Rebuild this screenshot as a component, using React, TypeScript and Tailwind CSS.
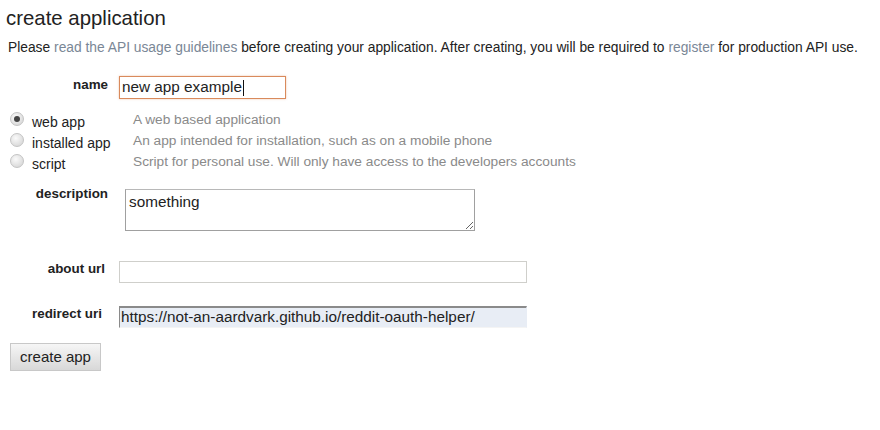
import React from "react";

const APP_TYPES = [
  { id: "web", label: "web app", help: "A web based application", checked: true },
  { id: "installed", label: "installed app", help: "An app intended for installation, such as on a mobile phone", checked: false },
  { id: "script", label: "script", help: "Script for personal use. Will only have access to the developers accounts", checked: false },
];

function Radio({ checked }: { checked: boolean }) {
  return (
    <span className="mb-[4px] flex h-[14px] w-[14px] shrink-0 items-center justify-center rounded-full border border-[#c4c4c4] bg-[radial-gradient(circle_at_40%_35%,#fafafa,#d0d0d0)]">
      {checked && <span className="h-[6px] w-[6px] rounded-full bg-[#444]" />}
    </span>
  );
}

export default function App() {
  return (
    <div className="h-[430px] w-[880px] bg-white font-['Liberation_Sans',Arial,sans-serif] text-[#222]">
      <h1 className="pl-[6px] pt-[5px] text-[20.4px] leading-[26px]">create application</h1>

      <p className="mt-[9px] pl-[8px] text-[13.8px] leading-[16px]">
        Please <a className="text-[#7a8796]">read the API usage guidelines</a> before creating your
        application. After creating, you will be required to{" "}
        <a className="text-[#7a8796]">register</a> for production API use.
      </p>

      {/* name */}
      <div className="mt-[20px] flex items-start">
        <label className="w-[108px] pt-[1px] text-right text-[13.4px] font-bold leading-[16px]">name</label>
        <div className="ml-[11px] flex h-[23px] w-[167px] items-center border border-[#d98a5c] px-[2px] text-[15.3px] shadow-[0_0_2px_rgba(217,138,92,0.5)]">
          new app example
          <span className="ml-[1px] h-[16px] w-px bg-[#111]" />
        </div>
      </div>

      {/* app type */}
      <div className="mt-[11px] flex flex-col">
        {APP_TYPES.map((t) => (
          <div key={t.id} className="flex h-[21px] items-center">
            <div className="ml-[10px] flex w-[123px] items-center">
              <Radio checked={t.checked} />
              <span className="ml-[8px] mt-[4px] text-[14px] text-[#222]">{t.label}</span>
            </div>
            <span className="text-[13.7px] text-[#8a8a8a]">{t.help}</span>
          </div>
        ))}
      </div>

      {/* description */}
      <div className="mt-[16px] flex items-start">
        <label className="-mt-px w-[108px] text-right text-[13.4px] font-bold leading-[12px]">description</label>
        <textarea
          readOnly
          defaultValue="something"
          className="ml-[17px] h-[42px] w-[350px] border border-[#a0a0a0] border-t-[#b8b8b8] px-[3px] pt-[3px] text-[15.3px] leading-[18px] text-[#222] outline-none"
        />
      </div>

      {/* about url */}
      <div className="mt-[30px] flex items-start">
        <label className="w-[105px] pt-[1px] text-right text-[13.4px] font-bold leading-[14px]">about url</label>
        <input
          readOnly
          className="ml-[14px] h-[22px] w-[408px] border border-[#cfcfcb] bg-white px-[2px] text-[15.3px] outline-none"
        />
      </div>

      {/* redirect uri */}
      <div className="mt-[23px] flex items-start">
        <label className="w-[102px] pt-[1px] text-right text-[13.4px] font-bold leading-[14px]">redirect uri</label>
        <input
          readOnly
          defaultValue="https://not-an-aardvark.github.io/reddit-oauth-helper/"
          className="ml-[17px] h-[22px] w-[408px] border-t-2 border-l border-[#8a8a8a] border-b border-b-[#f4f4f4] border-r border-r-[#e8edf5] bg-[#e8edf5] px-[1px] text-[15.3px] text-[#222] outline-none"
        />
      </div>

      <button
        type="button"
        className="ml-[10px] mt-[15px] h-[28px] w-[91px] border border-[#c8c8c8] bg-gradient-to-b from-[#f6f6f6] to-[#d8d8d8] text-[15px] text-[#222]"
      >
        create app
      </button>
    </div>
  );
}
